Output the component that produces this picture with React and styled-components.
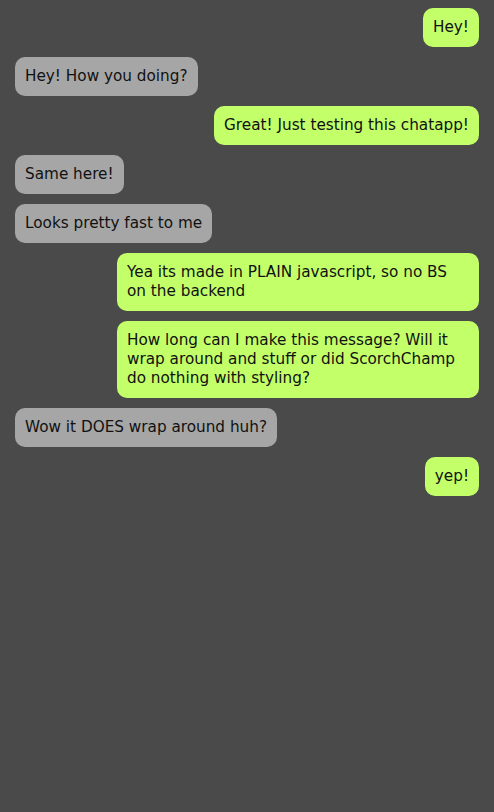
import React from "react";
import styled, { createGlobalStyle } from "styled-components";

const Global = createGlobalStyle`
  html, body { margin: 0; padding: 0; background: #4a4a4a; }
  body { font-family: "DejaVu Sans", Verdana, sans-serif; }
`;

const Page = styled.div`
  min-height: 812px;
  background: #4a4a4a;
  padding: 8px 15px;
  box-sizing: border-box;
  display: flex;
  flex-direction: column;
  gap: 10px;
`;

const Bubble = styled.div`
  align-self: ${(p) => (p.$mine ? "flex-end" : "flex-start")};
  max-width: 362px;
  box-sizing: border-box;
  padding: 10px;
  border-radius: 10px;
  background: ${(p) => (p.$mine ? "#c3ff69" : "#a6a6a6")};
  color: #111;
  font-size: 15.25px;
  line-height: 19px;
`;

const messages = [
  { mine: true, text: "Hey!" },
  { mine: false, text: "Hey! How you doing?" },
  { mine: true, text: "Great! Just testing this chatapp!" },
  { mine: false, text: "Same here!" },
  { mine: false, text: "Looks pretty fast to me" },
  { mine: true, text: "Yea its made in PLAIN javascript, so no BS on the backend" },
  { mine: true, text: "How long can I make this message? Will it wrap around and stuff or did ScorchChamp do nothing with styling?" },
  { mine: false, text: "Wow it DOES wrap around huh?" },
  { mine: true, text: "yep!" },
];

export default function App() {
  return (
    <>
      <Global />
      <Page>
        {messages.map((m, i) => (
          <Bubble key={i} $mine={m.mine}>{m.text}</Bubble>
        ))}
      </Page>
    </>
  );
}
